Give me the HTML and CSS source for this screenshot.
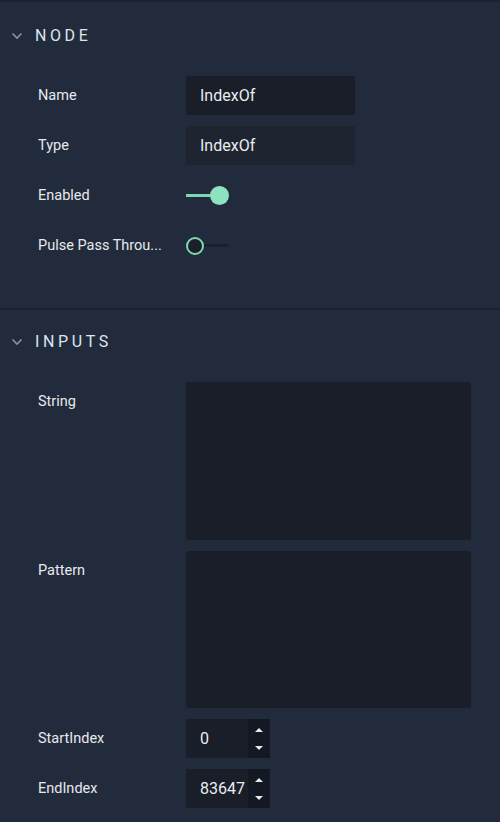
FILE: index.html
```html
<!DOCTYPE html>
<html>
<head>
<meta charset="utf-8">
<link rel="stylesheet" href="styles.css">
</head>
<body>
<div class="panel">
  <section class="section first">
    <div class="header">
      <svg class="chev" width="12" height="8" viewBox="0 0 12 8"><path d="M1.5 1.5 L6 6 L10.5 1.5" fill="none" stroke="#8b93a1" stroke-width="1.6"/></svg>
      <span class="title">NODE</span>
    </div>
    <div class="rows">
      <div class="row">
        <div class="label">Name</div>
        <div class="field input">IndexOf</div>
      </div>
      <div class="row">
        <div class="label">Type</div>
        <div class="field input disabled">IndexOf</div>
      </div>
      <div class="row">
        <div class="label">Enabled</div>
        <div class="toggle on"><span class="track"></span><span class="knob"></span></div>
      </div>
      <div class="row">
        <div class="label">Pulse Pass Throu...</div>
        <div class="toggle off"><span class="knob"></span><span class="track"></span></div>
      </div>
    </div>
  </section>
  <section class="section second">
    <div class="header">
      <svg class="chev" width="12" height="8" viewBox="0 0 12 8"><path d="M1.5 1.5 L6 6 L10.5 1.5" fill="none" stroke="#8b93a1" stroke-width="1.6"/></svg>
      <span class="title">INPUTS</span>
    </div>
    <div class="rows">
      <div class="row tall">
        <div class="label">String</div>
        <div class="textarea"></div>
      </div>
      <div class="row tall">
        <div class="label">Pattern</div>
        <div class="textarea"></div>
      </div>
      <div class="row">
        <div class="label">StartIndex</div>
        <div class="number"><span class="num">0</span><span class="spin"><svg width="22" height="39" viewBox="0 0 22 39"><path d="M7 13 L11 9 L15 13 Z" fill="#e6e9ee"/><path d="M7 27 L15 27 L11 31 Z" fill="#e6e9ee"/></svg></span></div>
      </div>
      <div class="row">
        <div class="label">EndIndex</div>
        <div class="number"><span class="num">83647</span><span class="spin"><svg width="22" height="39" viewBox="0 0 22 39"><path d="M7 13 L11 9 L15 13 Z" fill="#e6e9ee"/><path d="M7 27 L15 27 L11 31 Z" fill="#e6e9ee"/></svg></span></div>
      </div>
    </div>
  </section>
</div>
</body>
</html>
```

FILE: styles.css
```css
html, body {
  margin: 0;
  padding: 0;
  background: #222b3b;
}
body {
  font-family: Roboto, "Liberation Sans", sans-serif;
  color: #e2e6ec;
  width: 500px;
  height: 822px;
  overflow: hidden;
}
.panel {
  display: flex;
  flex-direction: column;
}
.section {
  border-top: 2px solid #1b2230;
}
.section.first {
  padding: 10px 0 43px 0;
}
.section.second {
  padding: 8px 0 0 0;
}
.header {
  height: 46px;
  display: flex;
  align-items: center;
  padding-left: 11px;
}
.chev {
  display: block;
  margin-right: 12px;
  margin-top: 1px;
}
.title {
  font-size: 16px;
  letter-spacing: 3.6px;
  color: #dde5ee;
  font-weight: 400;
}
.rows {
  margin-top: 18px;
  display: flex;
  flex-direction: column;
  gap: 11px;
}
.row {
  display: flex;
  align-items: center;
  height: 39px;
  padding-left: 38px;
}
.row.tall {
  height: 157.5px;
  align-items: flex-start;
}
.label {
  width: 148px;
  font-size: 14.5px;
  line-height: 40px;
  color: #e6e9ee;
  white-space: nowrap;
  overflow: hidden;
}
.field {
  width: 169px;
  height: 39px;
  box-sizing: border-box;
  padding-left: 14px;
  font-size: 16px;
  line-height: 39px;
  background: #191e28;
  color: #e9ecf1;
}
.field.disabled {
  background: #1e2531;
}
.toggle {
  display: flex;
  align-items: center;
  width: 44px;
  height: 20px;
}
.toggle.on .track {
  width: 26px;
  height: 3px;
  background: #7fd6b2;
}
.toggle.on .knob {
  width: 19px;
  height: 19px;
  border-radius: 50%;
  background: #8de2bf;
  margin-left: -2px;
}
.toggle.off .knob {
  width: 14px;
  height: 14px;
  border-radius: 50%;
  border: 2.5px solid #7fd6b2;
  background: #1a1f29;
}
.toggle.off .track {
  width: 24px;
  height: 3px;
  background: #1a1f29;
}
.textarea {
  width: 285px;
  height: 157.5px;
  background: #191e28;
  border-radius: 3px;
}
.number {
  display: flex;
  width: 84px;
  height: 39px;
  background: #191e28;
  overflow: hidden;
}
.num {
  width: 62px;
  box-sizing: border-box;
  padding-left: 14px;
  font-size: 16px;
  line-height: 40px;
  white-space: nowrap;
  color: #e9ecf1;
}
.spin {
  width: 22px;
  height: 39px;
  background: #131823;
  display: block;
}
.spin svg {
  display: block;
}
```
